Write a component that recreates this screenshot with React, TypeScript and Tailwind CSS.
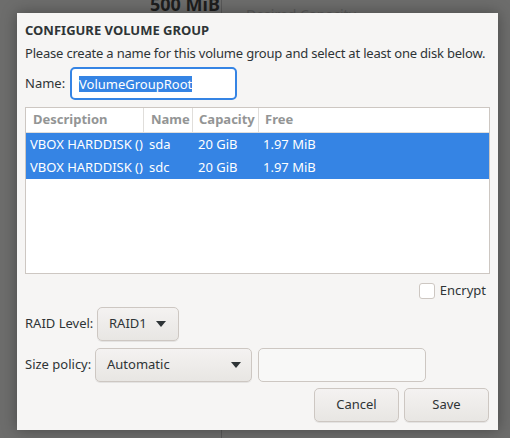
import { ReactNode } from "react";

const font = { fontFamily: '"Noto Sans", "Open Sans", sans-serif' };

function Caret() {
  return (
    <svg width="10" height="6" viewBox="0 0 10 6" className="shrink-0">
      <polygon points="0,0 10,0 5,6" fill="#2e3436" />
    </svg>
  );
}

function Button({ children, className = "" }: { children: ReactNode; className?: string }) {
  return (
    <div
      className={
        "flex items-center h-[34px] rounded-[5px] border border-[#cdc7c2] bg-gradient-to-b from-[#f4f2f1] to-[#e8e6e3] shadow-[0_1px_0_rgba(0,0,0,0.07)] text-[#2e3436] " +
        className
      }
    >
      {children}
    </div>
  );
}

const disks = [
  { desc: "VBOX HARDDISK ()", name: "sda", cap: "20 GiB", free: "1.97 MiB" },
  { desc: "VBOX HARDDISK ()", name: "sdc", cap: "20 GiB", free: "1.97 MiB" },
];

export default function App() {
  return (
    <div className="relative w-[510px] h-[438px] overflow-hidden bg-[#6d6d6c]" style={font}>
      {/* background window, dimmed */}
      <div className="flex h-[13px] items-end">
        <div className="w-[221px] h-full relative">
          <span className="absolute left-[150px] top-[-5px] text-[18px] font-bold text-[#1e1e1e] leading-[18px]">
            500 MiB
          </span>
        </div>
        <div className="w-px h-full bg-[#585858]" />
        <div className="relative flex-1 h-full">
          <span className="absolute left-[24px] top-[6px] text-[14px] text-[#5a5a5a] leading-[18px]">
            Desired Capacity
          </span>
        </div>
      </div>
      <div className="absolute left-[221px] top-[420px] w-px h-[18px] bg-[#585858]" />

      {/* dialog */}
      <div className="absolute left-[17px] top-[13px] w-[481px] h-[417px] bg-[#f6f5f4] shadow-[0_0_14px_rgba(0,0,0,0.35)] px-[8px] pt-[8px] text-[13px] text-[#2e3436] flex flex-col">
        <div className="font-bold leading-[18px] h-[18px]">CONFIGURE VOLUME GROUP</div>
        <div className="mt-[5px] leading-[18px] h-[18px] whitespace-nowrap tracking-[-0.2px]">
          Please create a name for this volume group and select at least one disk below.
        </div>

        <div className="mt-[5px] flex items-center h-[33px]">
          <span className="w-[45px]">Name:</span>
          <div className="w-[167px] h-[33px] rounded-[5px] border-2 border-[#3584e4] bg-white flex items-center pl-[7px]">
            <span className="bg-[#3584e4] text-white leading-[16px]">VolumeGroupRoot</span>
          </div>
        </div>

        {/* disk table */}
        <div className="mt-[7px] h-[167px] border border-[#cdc7c2] bg-white">
          <div className="flex h-[25px] border-b border-[#e0dedb] font-bold text-[#939595]">
            <div className="w-[118px] border-r border-[#e0dedb] pl-[7px] flex items-center">Description</div>
            <div className="w-[49px] border-r border-[#e0dedb] pl-[7px] flex items-center">Name</div>
            <div className="w-[66px] border-r border-[#e0dedb] pl-[6px] flex items-center">Capacity</div>
            <div className="flex-1 pl-[6px] flex items-center">Free</div>
          </div>
          {disks.map((d) => (
            <div key={d.name} className="flex h-[23px] items-center bg-[#3584e4] text-white">
              <div className="w-[118px] pl-[4px] whitespace-nowrap">{d.desc}</div>
              <div className="w-[49px] pl-[5px]">{d.name}</div>
              <div className="w-[66px] pl-[5px]">{d.cap}</div>
              <div className="flex-1 pl-[4px]">{d.free}</div>
            </div>
          ))}
        </div>

        <div className="mt-[8px] h-[18px] flex items-center justify-end gap-[5px] pr-[4px]">
          <div className="w-[16px] h-[16px] rounded-[3px] border border-[#cdc7c2] bg-white" />
          <span>Encrypt</span>
        </div>

        <div className="mt-[7px] flex items-center h-[34px]">
          <span className="w-[72px]">RAID Level:</span>
          <Button className="w-[82px] pl-[11px] pr-[12px] justify-between">
            <span>RAID1</span>
            <Caret />
          </Button>
        </div>

        <div className="mt-[7px] flex items-center h-[34px]">
          <span className="w-[70px]">Size policy:</span>
          <Button className="w-[157px] pl-[11px] pr-[10px] justify-between">
            <span>Automatic</span>
            <Caret />
          </Button>
          <div className="ml-[6px] w-[168px] h-[34px] rounded-[5px] border border-[#cdc7c2] bg-[#f8f8f7]" />
        </div>

        <div className="mt-[6px] flex justify-end gap-[5px] pr-[1px]">
          <Button className="w-[85px] justify-center">Cancel</Button>
          <Button className="w-[85px] justify-center">Save</Button>
        </div>
      </div>
    </div>
  );
}
